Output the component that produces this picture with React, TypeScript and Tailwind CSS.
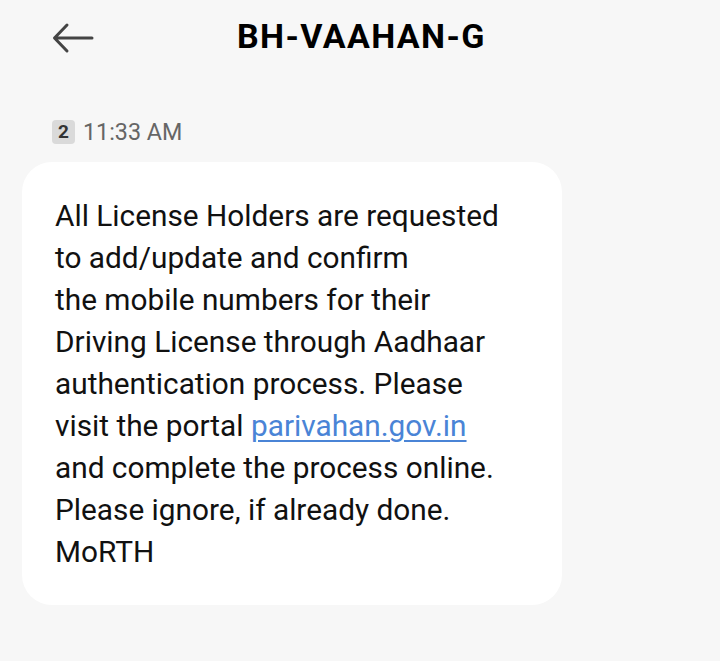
import React from "react";

const lines = [
  "All License Holders are requested",
  "to add/update and confirm",
  "the mobile numbers for their",
  "Driving License through Aadhaar",
  "authentication process. Please",
];

const tail = [
  "and complete the process online.",
  "Please ignore, if already done.",
  "MoRTH",
];

const BackArrow = () => (
  <svg width="42" height="32" viewBox="0 0 42 32" fill="none">
    <path
      d="M40 16H3M15 3L2.5 16L15 29"
      stroke="#444"
      strokeWidth="3"
      strokeLinecap="round"
      strokeLinejoin="round"
    />
  </svg>
);

export default function App() {
  return (
    <div
      className="w-[720px] h-[661px] bg-[#f7f7f7] text-black"
      style={{ fontFamily: "Roboto, 'Noto Sans', sans-serif" }}
    >
      {/* header */}
      <div className="flex items-center h-[76px] pl-[52px]">
        <BackArrow />
        <h1 className="ml-[143px] text-[34px] font-bold tracking-[1.4px] leading-none mt-[-4px]">
          BH-VAAHAN-G
        </h1>
      </div>

      {/* timestamp */}
      <div className="flex items-center pl-[52px] mt-[43px] h-[26px]">
        <span className="flex items-center justify-center w-[23px] h-[24px] rounded-[4px] bg-[#dadada] text-[19px] font-bold text-[#333]">
          2
        </span>
        <span className="ml-[8px] text-[23.3px] text-[#666]">11:33 AM</span>
      </div>

      {/* message bubble */}
      <div className="ml-[22px] mt-[17px] w-[540px] rounded-[30px] bg-white pl-[33px] pt-[33px] pb-[32px]">
        <div className="text-[29.8px] leading-[42px] text-[#111]">
          {lines.map((l) => (
            <div key={l}>{l}</div>
          ))}
          <div>
            visit the portal{" "}
            <span className="text-[#4a84d6] underline decoration-[1.5px] underline-offset-[4px]">
              parivahan.gov.in
            </span>
          </div>
          {tail.map((l) => (
            <div key={l}>{l}</div>
          ))}
        </div>
      </div>
    </div>
  );
}
